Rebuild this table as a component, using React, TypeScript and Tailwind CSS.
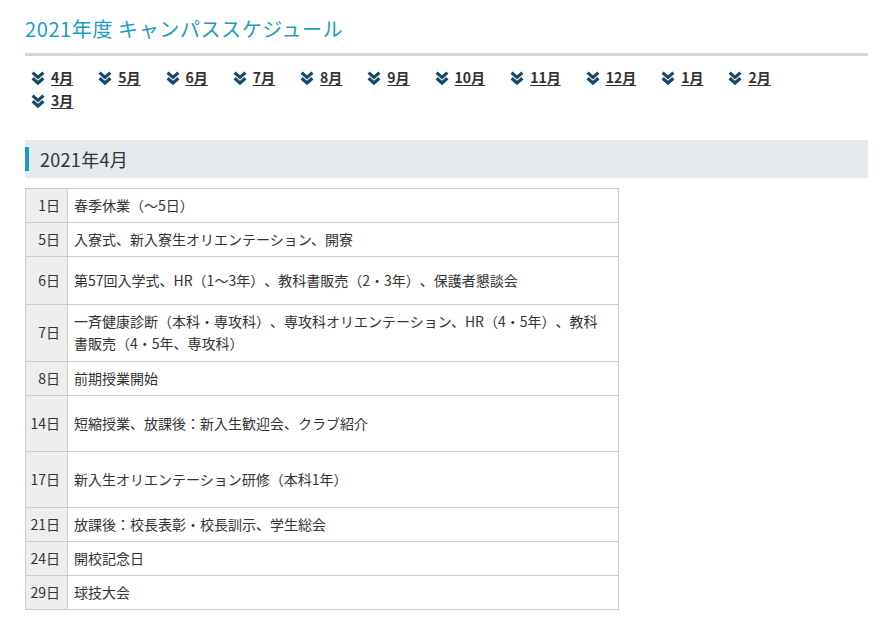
const months = ["4月", "5月", "6月", "7月", "8月", "9月", "10月", "11月", "12月", "1月", "2月", "3月"];

const rows: { day: string; text: string; h: string }[] = [
  { day: "1日", text: "春季休業（～5日）", h: "h-[34px]" },
  { day: "5日", text: "入寮式、新入寮生オリエンテーション、開寮", h: "h-[34px]" },
  { day: "6日", text: "第57回入学式、HR（1～3年）、教科書販売（2・3年）、保護者懇談会", h: "h-[48px]" },
  { day: "7日", text: "一斉健康診断（本科・専攻科）、専攻科オリエンテーション、HR（4・5年）、教科書販売（4・5年、専攻科）", h: "h-[57px]" },
  { day: "8日", text: "前期授業開始", h: "h-[34px]" },
  { day: "14日", text: "短縮授業、放課後：新入生歓迎会、クラブ紹介", h: "h-[56px]" },
  { day: "17日", text: "新入生オリエンテーション研修（本科1年）", h: "h-[56px]" },
  { day: "21日", text: "放課後：校長表彰・校長訓示、学生総会", h: "h-[34px]" },
  { day: "24日", text: "開校記念日", h: "h-[34px]" },
  { day: "29日", text: "球技大会", h: "h-[34px]" },
];

function ChevronsDown() {
  return (
    <svg width="14" height="14" viewBox="0 0 14 14" className="shrink-0">
      <path
        d="M1.6 1.6 L7 6.4 L12.4 1.6 M1.6 7.2 L7 12 L12.4 7.2"
        fill="none"
        stroke="#174a69"
        strokeWidth="3.2"
        strokeLinejoin="miter"
      />
    </svg>
  );
}

export default function App() {
  return (
    <div className="min-h-[631px] bg-white pl-[25px] pr-[19px] text-[#333] font-['Noto_Sans_CJK_JP','Noto_Sans',sans-serif] [text-spacing-trim:space-all]">
      {/* Page title */}
      <h1 className="border-b-[3px] border-[#cfd8dc] pt-[15px] pb-[11px] text-[20px] leading-[27px] font-normal tracking-[0.6px] text-[#1a9cc5]">
        2021年度 キャンパススケジュール
      </h1>

      {/* Month anchors */}
      <ul className="mt-[10px] flex flex-wrap pl-[6px] pr-[60px]">
        {months.map((m) => (
          <li key={m} className="mr-[25px] flex h-[23px] items-center gap-[6px]">
            <ChevronsDown />
            <a href={`#${m}`} className="text-[14px] font-bold leading-[23px] text-[#333] underline underline-offset-2">
              {m}
            </a>
          </li>
        ))}
      </ul>

      {/* Month heading */}
      <h2 className="mt-[28px] flex h-[38px] items-center bg-[#e5eaec] text-[18px] font-normal tracking-[0.3px] text-[#333]">
        <span className="mr-[11px] h-[24px] w-[4px] bg-[#1a9cc5]" />
        2021年4月
      </h2>

      {/* Schedule table */}
      <table className="mt-[10px] w-[594px] border-collapse text-[14px] leading-[22px]">
        <tbody>
          {rows.map((r) => (
            <tr key={r.day} className={r.h}>
              <td className="w-[42px] border border-[#ccc] bg-[#eee] pr-[7px] pb-[2px] text-right align-middle">{r.day}</td>
              <td className="border border-[#ccc] pl-[6px] pr-[12px] pb-[2px] align-middle">{r.text}</td>
            </tr>
          ))}
        </tbody>
      </table>
    </div>
  );
}
